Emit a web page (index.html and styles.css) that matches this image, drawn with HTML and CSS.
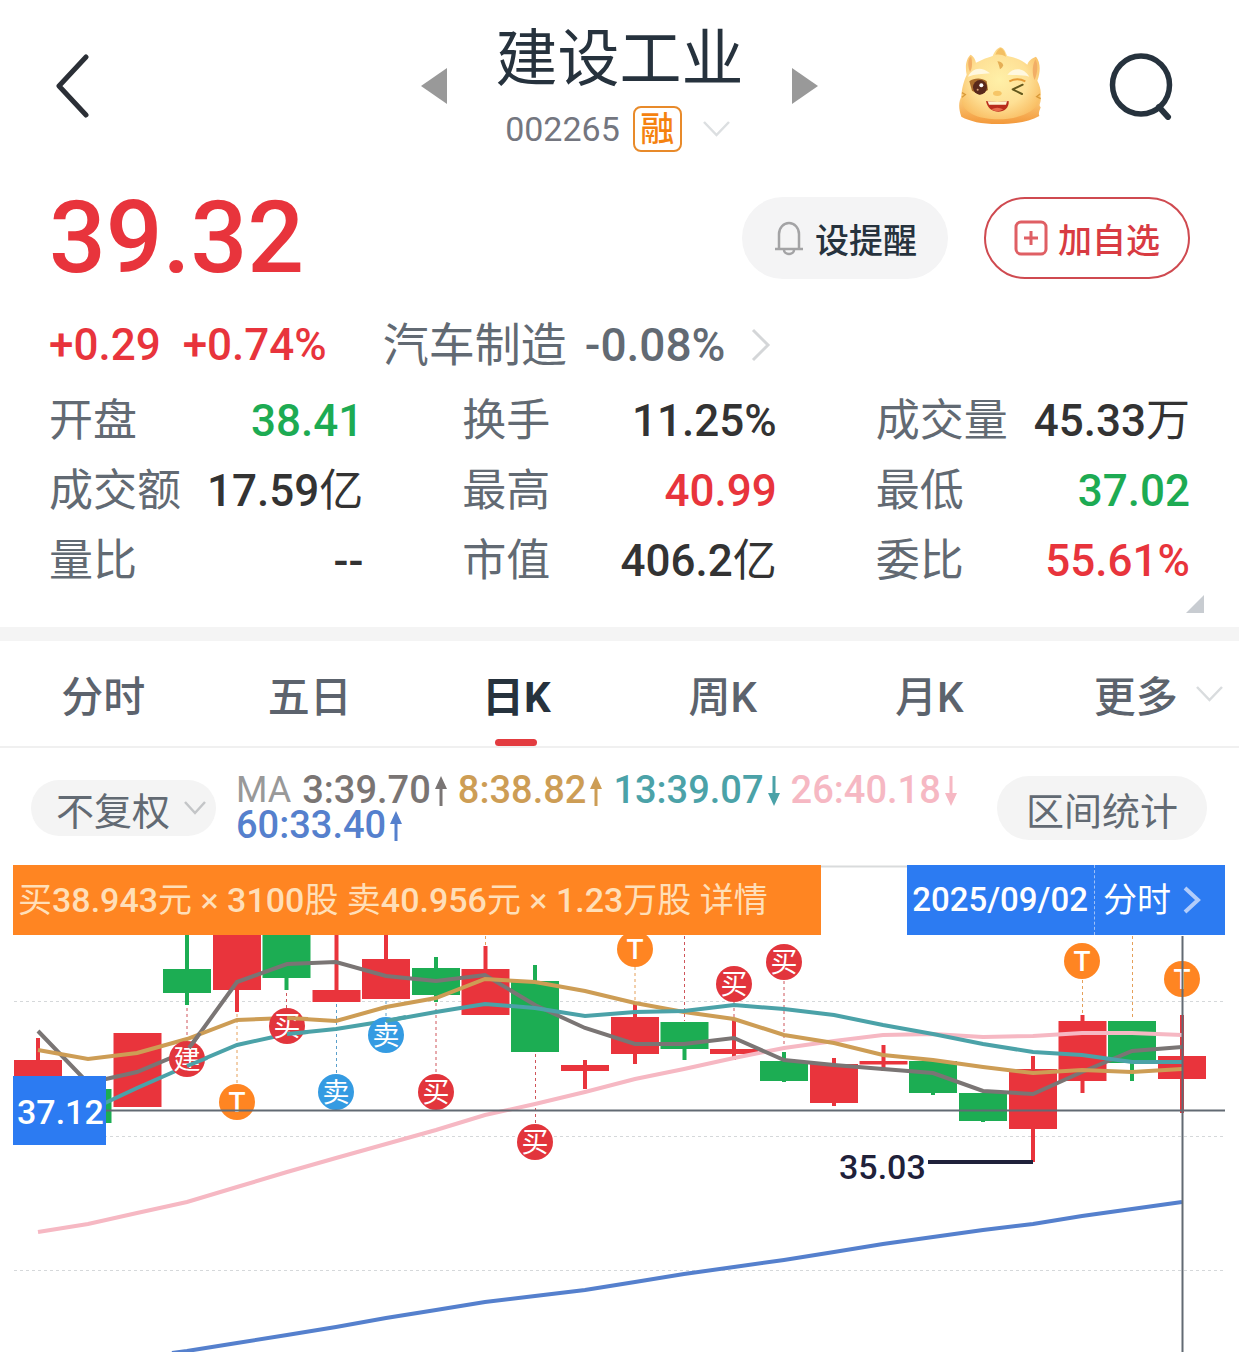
FILE: index.html
```html
<!DOCTYPE html>
<html lang="zh-CN">
<head>
<meta charset="utf-8">
<meta name="viewport" content="width=device-width, initial-scale=1">
<title>建设工业 002265</title>
<link rel="stylesheet" href="styles.css">
</head>
<body>
<header class="topbar">
  <button class="icon-btn back" aria-label="返回">
    <svg width="36" height="64" viewBox="0 0 36 64"><path d="M32 3 5 32l27 29" fill="none" stroke="#2b2f36" stroke-width="5" stroke-linecap="round" stroke-linejoin="round"/></svg>
  </button>
  <div class="switcher">
    <button class="icon-btn" aria-label="上一只">
      <svg width="26" height="36" viewBox="0 0 26 36"><path d="M26 0v36L0 18z" fill="#999"/></svg>
    </button>
    <div class="stock">
      <h1 class="stock-name">建设工业</h1>
      <div class="stock-meta">
        <span class="stock-code">002265</span>
        <span class="badge">融</span>
        <svg class="meta-chevron" width="27" height="16" viewBox="0 0 27 16"><path d="M1 1l12.500 13L26 1" fill="none" stroke="#dcdfe1" stroke-width="2.500"/></svg>
      </div>
    </div>
    <button class="icon-btn" aria-label="下一只">
      <svg width="26" height="36" viewBox="0 0 26 36"><path d="M0 0v36l26-18z" fill="#999"/></svg>
    </button>
  </div>
  <div class="actions">
    <button class="icon-btn" aria-label="智能助手">
      <svg width="86" height="80" viewBox="54 42 258 240">
        <defs>
          <radialGradient id="face" cx=".48" cy=".45" r=".6"><stop offset="0" stop-color="#fff0a8"/><stop offset=".6" stop-color="#fee095"/><stop offset="1" stop-color="#f9bd62"/></radialGradient>
          <linearGradient id="base" x1="0" y1="0" x2="0" y2="1"><stop offset="0" stop-color="#fbd183"/><stop offset="1" stop-color="#f3993b"/></linearGradient>
        </defs>
        <path d="M66 190c-12 22-10 40-2 64 26 14 58 22 110 22s92-6 124-24c-4-10 2-18 4-26-10-8 8-20-4-36z" fill="url(#base)"/>
        <path d="M80 128C74 100 80 78 92 68c12 8 14 16 16 24 20-10 36-16 50-20 6-14 14-24 24-26 10 2 14 14 20 26 24 4 44 12 60 26 4-12 12-18 26-24 14 16 14 46 4 72 10 20 14 38 6 62-14 36-70 54-124 54-50 0-96-14-108-48-6-30 4-64 14-86z" fill="url(#face)"/>
        <path d="M90 76c-8 12-6 30 0 44 6-10 8-24 4-44zM286 82c10 16 6 42-2 62-8-16-8-42 2-62z" fill="#f2ae66"/>
        <path d="M166 68c4-10 10-18 17-20 9 6 13 14 15 26-10-6-20-8-32-6z" fill="#f3bf63"/>
        <path d="M172 88c8 0 16 4 18 12-2 6-6 10-10 12-2-8-4-16-8-24z" fill="#e5ae55"/>
        <path d="M84 134c14-26 38-32 66-10-22 2-44 2-66 10zM202 128c20-24 50-20 66 6-20-6-40-4-66-6z" fill="#fff8df"/>
        <path d="M88 148c14-10 36-12 52 0l4 26-26 14-22-12z" fill="#a96c2b"/>
        <ellipse cx="120" cy="166" rx="21" ry="22" fill="#59291b"/>
        <circle cx="124" cy="160" r="6" fill="#fff"/><circle cx="113" cy="173" r="3" fill="#d8a177"/>
        <path d="M208 148q24-12 48 0" fill="none" stroke="#e59c37" stroke-width="6"/>
        <path d="M248 158l-30 14 28 14" fill="none" stroke="#62571c" stroke-width="6" stroke-linecap="round" stroke-linejoin="round"/>
        <ellipse cx="172" cy="184" rx="13" ry="8" fill="#f6c667"/>
        <path d="M138 207q34 6 68 0c4 40-60 46-68 0z" fill="#b92c1c"/>
        <path d="M143 208q30 4 58 0l-3 10h-51z" fill="#fff2cf"/>
        <path d="M154 232q18-10 36 0-18 12-36 0z" fill="#e96b4b"/>
        <path d="M66 182l10 6-10 8M300 186l-10 8 12 6" fill="none" stroke="#d99a38" stroke-width="4"/>
      </svg>
    </button>
    <button class="icon-btn" aria-label="搜索">
      <svg width="64" height="68" viewBox="0 0 64 68"><ellipse cx="32" cy="33" rx="28.500" ry="29" fill="none" stroke="#26323d" stroke-width="5.500"/><path d="M50 55l9 10" stroke="#26323d" stroke-width="6" stroke-linecap="round"/></svg>
    </button>
  </div>
</header>

<section class="quote">
  <div class="price-row">
    <strong class="price">39.32</strong>
    <button class="pill-btn remind">
      <svg width="32" height="36" viewBox="0 0 32 36" fill="none" stroke="#a3a3a5" stroke-width="2.500"><path d="M6 28V14a10 11 0 0 1 20 0v14M2 29h28M11 30a5 4 0 0 0 10 0"/></svg>
      设提醒
    </button>
    <button class="pill-btn favor">
      <svg width="34" height="36" viewBox="0 0 34 36" fill="none" stroke="#df5f64" stroke-width="3"><rect x="2" y="2" width="30" height="32" rx="5"/><path d="M17 11v14M10 18h14"/></svg>
      加自选
    </button>
  </div>
  <div class="change-row">
    <span class="up">+0.29</span>
    <span class="up">+0.74%</span>
    <a class="sector" href="#sector"><span class="sector-name">汽车制造</span><span>-0.08%</span>
      <svg width="20" height="34" viewBox="0 0 20 34"><path d="M2 2l15 15L2 32" fill="none" stroke="#d4d6d8" stroke-width="3"/></svg>
    </a>
  </div>
  <dl class="stats">
    <div class="stat"><dt>开盘</dt><dd class="down">38.41</dd></div>
    <div class="stat"><dt>换手</dt><dd>11.25%</dd></div>
    <div class="stat"><dt>成交量</dt><dd>45.33<span class="unit">万</span></dd></div>
    <div class="stat"><dt>成交额</dt><dd>17.59<span class="unit">亿</span></dd></div>
    <div class="stat"><dt>最高</dt><dd class="up">40.99</dd></div>
    <div class="stat"><dt>最低</dt><dd class="down">37.02</dd></div>
    <div class="stat"><dt>量比</dt><dd>--</dd></div>
    <div class="stat"><dt>市值</dt><dd>406.2<span class="unit">亿</span></dd></div>
    <div class="stat"><dt>委比</dt><dd class="up">55.61%</dd></div>
  </dl>
  <svg class="expand" width="18" height="18" viewBox="0 0 18 18"><path d="M18 0v18H0z" fill="#c8ccd1"/></svg>
</section>

<nav class="tabs">
  <button class="tab">分时</button>
  <button class="tab">五日</button>
  <button class="tab active">日K</button>
  <button class="tab">周K</button>
  <button class="tab">月K</button>
  <button class="tab">更多<svg class="tab-chevron" width="27" height="16" viewBox="0 0 27 16"><path d="M1 1l12.500 13L26 1" fill="none" stroke="#d9dcde" stroke-width="2.500"/></svg></button>
</nav>

<div class="toolbar">
  <button class="chip adjust">不复权
    <svg width="22" height="14" viewBox="0 0 22 14"><path d="M1 1l10 11L21 1" fill="none" stroke="#c3c5c7" stroke-width="2.500"/></svg>
  </button>
  <div class="legend">
    <span class="ma-title">MA</span>
    <span class="ma ma3">3:39.70<svg width="12" height="30" viewBox="0 0 12 30"><path d="M6 0l6 13H7.500v17h-3V13H0z"/></svg></span>
    <span class="ma ma8">8:38.82<svg width="12" height="30" viewBox="0 0 12 30"><path d="M6 0l6 13H7.500v17h-3V13H0z"/></svg></span>
    <span class="ma ma13">13:39.07<svg width="12" height="30" viewBox="0 0 12 30"><path d="M6 30l6-13H7.500V0h-3v17H0z"/></svg></span>
    <span class="ma ma26">26:40.18<svg width="12" height="30" viewBox="0 0 12 30"><path d="M6 30l6-13H7.500V0h-3v17H0z"/></svg></span>
    <span class="ma ma60">60:33.40<svg width="12" height="30" viewBox="0 0 12 30"><path d="M6 0l6 13H7.500v17h-3V13H0z"/></svg></span>
  </div>
  <button class="chip">区间统计</button>
</div>

<main class="chart">
  <svg class="kline" viewBox="0 865 1239 487" role="img" aria-label="日K线图">
    <path d="M13 866.500H1225" stroke="#d9dbdc" stroke-width="2"/>
    <path class="grid" d="M14 1001.500H1225M14 1136.500H1225M14 1270.500H1225"/>

    <path class="body red" d="M38 1060V1100M137.500 1033V1107M237 900V990M336.500 990V1002M386 959V999M485.500 969V1015M585 1065V1071M635 1017V1054M734 1049V1054M834 1064V1103M883.500 1061V1064.500M1033 1069V1129M1082.500 1021V1081M1182 1056V1079"/>
    <path class="body green" d="M87.500 1089V1123M187 969V993M286.500 900V978M436 968V995M535 981V1052M684.500 1022V1049M784 1061V1081M933 1061V1093M983 1093V1121M1132 1021V1063"/>
    <path class="wick red" d="M38 1038V1062M237 985V1012M336.500 900V992M386 900V960M485.500 946V970M585 1060V1089M635 1003V1064M734 1020V1060M834 1058V1106M883.500 1045V1071M1033 1056V1162M1082.500 1015V1093M1182 1015V1113"/>
    <path class="wick green" d="M187 900V1005M286.500 975V990M436 957V1002M535 965V983M684.500 1045V1060M784 1052V1082M933 1090V1095M983 1119V1122M1132 1060V1081"/>

    <path class="leader" stroke="#cf555a" d="M187 1008V1041M286.500 993V1008M436 1003V1074M535.500 1054V1124M684.500 936V1021M734 1002V1020M784 981V1052"/>
    <path class="leader" stroke="#e5a05a" d="M237 1014V1084M485.500 936V946M635 967V1003M1082.500 980V1014M1132.500 936V1020"/>
    <path class="leader" stroke="#5a9fcb" d="M336.500 1004V1074M386 1001V1017"/>

    <polyline class="line ma26-line" points="38,1232 88,1224 137,1213 187,1202 237,1187 287,1172 336,1158 386,1144 436,1130 485,1115 535,1104 585,1092 635,1079 684,1069 734,1058 784,1048 834,1041 883,1035 933,1034 983,1037 1033,1036 1082,1033 1132,1033 1182,1035"/>
    <polyline class="line ma60-line" points="172,1353 187,1351 237,1343 287,1335 336,1327 386,1318 436,1310 485,1302 535,1296 585,1290 635,1282 684,1274 734,1267 784,1260 834,1252 883,1244 933,1237 983,1230 1033,1224 1082,1216 1132,1209 1182,1202"/>
    <polyline class="line ma3-line" points="38,1031 88,1083 137,1072 187,1051 237,982 287,964 336,962 386,976 436,981 485,975 535,1005 585,1028 635,1044 684,1044 734,1038 784,1060 834,1065 883,1069 933,1073 983,1091 1033,1094 1082,1072 1132,1051 1182,1047"/>
    <polyline class="line ma8-line" points="38,1050 88,1059 137,1053 187,1039 237,1020 287,1018 336,1021 386,1007 436,998 485,979 535,982 585,991 635,1003 684,1012 734,1019 784,1035 834,1043 883,1055 933,1060 983,1067 1033,1073 1082,1070 1132,1072 1182,1069"/>
    <polyline class="line ma13-line" points="88,1111 137,1088 187,1066 237,1045 287,1034 336,1029 386,1021 436,1012 485,1004 535,1008 585,1016 635,1012 684,1011 734,1005 784,1009 834,1015 883,1025 933,1034 983,1044 1033,1052 1082,1055 1132,1062 1182,1062"/>

    <g class="marker">
      <circle class="buy" cx="187" cy="1059" r="18"/><text x="187" y="1069">建</text>
      <circle class="t" cx="237" cy="1102" r="18"/><text class="t-text" x="237" y="1112">T</text>
      <circle class="buy" cx="287" cy="1026" r="18"/><text x="287" y="1036">买</text>
      <circle class="sell" cx="336" cy="1092" r="18"/><text x="336" y="1102">卖</text>
      <circle class="sell" cx="386" cy="1035" r="18"/><text x="386" y="1045">卖</text>
      <circle class="buy" cx="436" cy="1092" r="18"/><text x="436" y="1102">买</text>
      <circle class="buy" cx="535" cy="1142" r="18"/><text x="535" y="1152">买</text>
      <circle class="t" cx="635" cy="949" r="18"/><text class="t-text" x="635" y="959">T</text>
      <circle class="buy" cx="734" cy="984" r="18"/><text x="734" y="994">买</text>
      <circle class="buy" cx="784" cy="962" r="18"/><text x="784" y="972">买</text>
      <circle class="t" cx="1082" cy="961" r="18"/><text class="t-text" x="1082" y="971">T</text>
      <circle class="t" cx="1182" cy="979" r="18"/><text class="t-text" x="1182" y="989">T</text>
    </g>
    <path class="line ma3-line" d="M189 1048L200 1033"/>
    <path class="line ma8-line" d="M287 1018L308 1019"/>
    <path class="line ma13-line" d="M187 1066L207 1058M287 1034L308 1032M386 1021L406 1017"/>

    <path d="M106 1110.500H1225M1182.500 936V1352" stroke="#626a73" stroke-width="2"/>
    <text class="low-label" x="839" y="1179">35.03</text>
    <path d="M928 1162H1033" stroke="#20213a" stroke-width="4"/>
    <rect x="13" y="1076" width="93" height="69" fill="#2c7bf2"/>
    <text class="cross-price" x="17" y="1124">37.12</text>
  </svg>
  <div class="overlay">
    <button class="deal">买<b>38.943</b>元 × <b>3100</b>股 卖<b>40.956</b>元 × <b>1.23</b>万股 详情</button>
    <div class="date-box">
      <span class="date">2025/09/02</span>
      <button class="minute">分时
        <svg width="18" height="28" viewBox="0 0 18 28"><path d="M2 2l13 12L2 26" fill="none" stroke="#b3cdfa" stroke-width="4"/></svg>
      </button>
    </div>
  </div>
</main>
</body>
</html>
```
FILE: styles.css
```css
* { box-sizing: border-box; }

body {
  margin: 0;
  background: #fff;
  color: #333;
  font-family: Roboto, "Noto Sans CJK SC", sans-serif;
  font-size: 44px;
  overflow-x: hidden;
}

button {
  margin: 0;
  padding: 0;
  border: 0;
  background: none;
  color: inherit;
  font: inherit;
  white-space: nowrap;
}

svg { display: block; flex: none; }

.up { color: #e8343c; }
.down { color: #1dab53; }

/* top bar */
.topbar {
  display: grid;
  grid-template-columns: 1fr auto 1fr;
  align-items: center;
  padding: 20px 54px 0;
}
.back { justify-self: start; }
.switcher {
  display: flex;
  align-items: center;
  gap: 48px;
}
.stock-name {
  margin: 0;
  color: #26323d;
  font-size: 62px;
  font-weight: 400;
  line-height: 80px;
}
.stock-meta {
  display: flex;
  align-items: center;
  justify-content: center;
  gap: 13px;
  margin-top: 6px;
}
.stock-code {
  color: #74767f;
  font-size: 34px;
  line-height: 46px;
}
.badge {
  width: 49px;
  border: 2px solid #e88a2a;
  border-radius: 8px;
  color: #f5820f;
  font-size: 34px;
  font-weight: 500;
  line-height: 42px;
  text-align: center;
}
.meta-chevron { margin: 0 4px 0 8px; }
.actions {
  display: flex;
  align-items: center;
  justify-content: flex-end;
  gap: 65px;
  padding-right: 12px;
}

/* quote */
.quote {
  position: relative;
  padding: 45px 49px 31px;
  border-bottom: 14px solid #f4f4f4;
}
.price-row {
  display: flex;
  align-items: center;
  gap: 36px;
}
.price {
  margin-right: auto;
  color: #e8343c;
  font-size: 100px;
  font-weight: 500;
  line-height: 82px;
}
.pill-btn {
  display: flex;
  align-items: center;
  justify-content: center;
  gap: 10px;
  width: 206px;
  height: 82px;
  border-radius: 41px;
  font-size: 34px;
  font-weight: 500;
}
.remind { background: #f4f4f5; color: #26323d; }
.favor { border: 2px solid #cf4a50; color: #d83b42; }
.change-row {
  display: flex;
  align-items: center;
  gap: 22px;
  margin-top: 36px;
  font-weight: 500;
  line-height: 60px;
}
.sector {
  display: flex;
  align-items: center;
  gap: 18px;
  margin-left: 34px;
  color: #626a73;
  font-size: 46px;
  text-decoration: none;
}
.sector svg { margin-left: 8px; }
.sector-name { font-weight: 400; }
.stats {
  display: grid;
  grid-template-columns: repeat(3, 1fr);
  column-gap: 99px;
  margin: 11px 0 0;
  line-height: 70px;
}
.stat {
  display: flex;
  justify-content: space-between;
  white-space: nowrap;
}
dt { color: #626a73; }
dd { margin: 0; font-weight: 500; }
.unit { font-weight: 400; }
.expand {
  position: absolute;
  right: 35px;
  bottom: 14px;
}

/* period tabs */
.tabs {
  display: grid;
  grid-template-columns: repeat(6, 1fr);
  border-bottom: 2px solid #f0f0f0;
}
.tab {
  position: relative;
  height: 105px;
  color: #5c636d;
  font-size: 42px;
  font-weight: 500;
}
.tab.active { color: #26323d; font-weight: 700; }
.tab.active::after {
  content: "";
  position: absolute;
  bottom: 0;
  left: calc(50% - 21px);
  width: 42px;
  height: 7px;
  border-radius: 4px;
  background: #e33c40;
}
.tab-chevron {
  position: absolute;
  top: 45px;
  right: 16px;
}

/* indicator row */
.toolbar {
  display: flex;
  align-items: center;
  gap: 20px;
  padding: 25px 32px 22px 31px;
  font-size: 38px;
}
.chip {
  flex: none;
  height: 64px;
  padding: 0 29px;
  border-radius: 32px;
  background: #f4f4f4;
  color: #626a73;
}
.adjust {
  display: flex;
  align-items: center;
  gap: 14px;
  height: 56px;
  padding: 0 10px 0 25px;
}
.legend {
  display: flex;
  flex: 1;
  flex-wrap: wrap;
  column-gap: 11px;
  line-height: 35px;
}
.ma-title { color: #999; font-size: 36px; }
.ma {
  display: flex;
  align-items: center;
  gap: 4px;
  fill: currentColor;
  font-weight: 500;
}
.ma3 { color: #7a7574; }
.ma8 { color: #cd9d55; }
.ma13 { color: #4ba2a8; }
.ma26 { color: #f6b8c3; }
.ma60 { color: #5580cd; }

/* chart */
.chart { position: relative; }
.kline { width: 100%; height: auto; }
.grid {
  stroke: #d5d8da;
  stroke-width: 1;
  stroke-dasharray: 3 3;
}
.body { stroke-width: 48; }
.wick { stroke-width: 4; }
.red { stroke: #e9343c; }
.green { stroke: #1cad53; }
.leader { stroke-width: 1; stroke-dasharray: 3 3; }
.line { fill: none; stroke-width: 4; }
.ma3-line { stroke: #7a7574; }
.ma8-line { stroke: #cd9d55; }
.ma13-line { stroke: #4ba2a8; }
.ma26-line { stroke: #f6b8c3; }
.ma60-line { stroke: #5580cd; }
.marker {
  fill: #fff;
  font-size: 27px;
  text-anchor: middle;
}
.t-text { font-size: 28px; font-weight: 500; }
.buy { fill: #e2353c; }
.sell { fill: #349be2; }
.t { fill: #ff8522; }
.low-label { fill: #20213a; font-size: 34px; font-weight: 500; }
.cross-price { fill: #fff; font-size: 34px; font-weight: 500; }
.overlay {
  position: absolute;
  top: 0;
  left: 13px;
  right: 14px;
  display: flex;
  justify-content: space-between;
  font-size: 34px;
  line-height: 70px;
}
.deal {
  padding: 0 53px 0 5px;
  background: #ff8522;
  color: #ffdfb8;
}
.deal b { font-weight: 500; }
.date-box {
  display: flex;
  padding-left: 5px;
  background: #2c7bf2;
  color: #fff;
}
.date {
  padding-right: 6px;
  border-right: 1px dashed #9fc1f8;
  font-size: 33px;
  font-weight: 500;
}
.minute {
  display: flex;
  align-items: center;
  gap: 12px;
  padding: 0 24px 0 8px;
}
```
